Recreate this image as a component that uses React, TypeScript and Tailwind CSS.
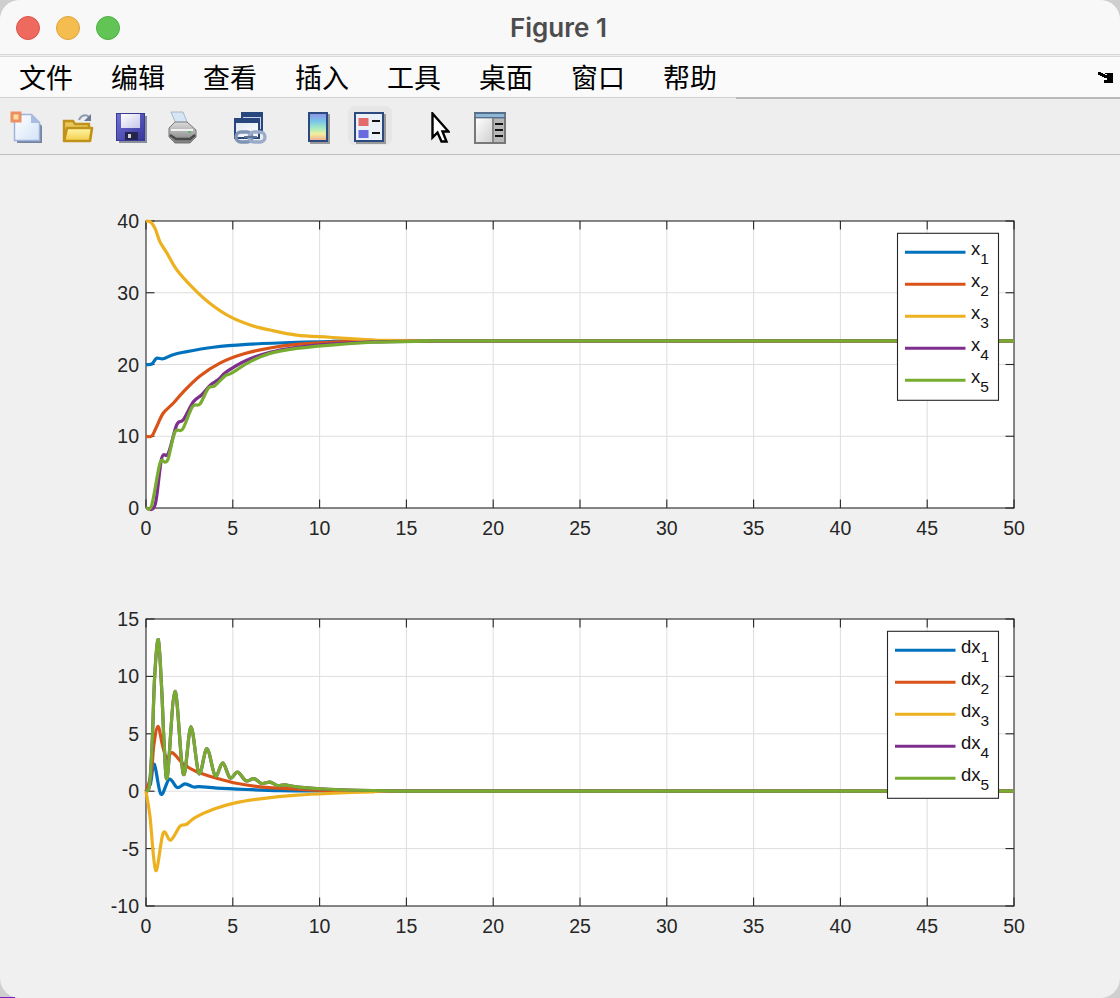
import React from 'react';

const BLUE = '#0072bd';
const RED = '#d95319';
const YELLOW = '#edb120';
const PURPLE = '#7e2f8e';
const GREEN = '#77ac30';

type Pt = [number, number];

const menus = ['文件', '编辑', '查看', '插入', '工具', '桌面', '窗口', '帮助'];

// traces read off the figure as [t, value]
const x1: Pt[] = [[0, 20], [0.33, 20.07], [0.61, 20.86], [0.99, 20.8], [1.48, 21.3], [2.15, 21.7], [3.88, 22.4], [5.8, 22.8], [8.68, 23.1], [10.6, 23.2], [15, 23.28], [50, 23.3]];
const x2: Pt[] = [[0, 10], [0.33, 10.03], [0.61, 11.33], [0.99, 13.2], [1.57, 14.6], [2.15, 16.2], [3.11, 18.4], [4.26, 20.2], [5.6, 21.46], [7.14, 22.3], [8.68, 22.8], [10.6, 23.1], [13, 23.25], [16, 23.3], [50, 23.3]];
const x3: Pt[] = [[0, 40], [0.3, 39.8], [0.55, 38.8], [0.8, 37.1], [1.19, 35.6], [1.77, 33.2], [2.73, 30.6], [3.69, 28.5], [4.84, 26.66], [6, 25.5], [7.14, 24.8], [8.68, 24.1], [10.6, 23.8], [13, 23.45], [17, 23.33], [50, 23.3]];
const x4: Pt[] = [[0, 0], [0.52, 0.4], [0.9, 6.9], [1.28, 7.6], [1.77, 11.6], [2.15, 12.3], [2.73, 14.8], [3.2, 15.75], [3.69, 17.1], [4.17, 17.9], [4.65, 19], [5.8, 20.6], [7.14, 21.7], [8.68, 22.4], [10.6, 22.85], [13, 23.15], [16, 23.27], [20, 23.3], [50, 23.3]];
const x5: Pt[] = [[0, 0], [0.33, 0.4], [0.8, 6.2], [1.09, 6.4], [1.28, 6.9], [1.67, 10.6], [2.11, 11], [2.67, 14.1], [3.11, 14.5], [3.59, 16.7], [3.97, 17.05], [4.55, 18.4], [4.93, 18.8], [6, 20.4], [7.14, 21.55], [8.68, 22.25], [10.6, 22.7], [13, 23.1], [16, 23.25], [19, 23.3], [50, 23.3]];

const d1: Pt[] = [[0, 0], [0.25, 0.6], [0.48, 2.35], [0.86, -0.26], [1.34, 1.05], [1.8, 0.32], [2.25, 0.64], [2.73, 0.37], [3.1, 0.4], [4.1, 0.27], [5.8, 0.15], [7.7, 0.05], [10, 0.02], [16, 0], [50, 0]];
const d2: Pt[] = [[0, 0], [0.3, 1.5], [0.45, 4], [0.69, 5.65], [0.95, 4], [1.2, 2.85], [1.52, 3.35], [2.15, 2.36], [2.92, 1.69], [4.06, 1.13], [5.2, 0.69], [6.7, 0.35], [8.7, 0.18], [10.5, 0.05], [16, 0], [50, 0]];
const d3: Pt[] = [[0, 0], [0.23, -2.2], [0.56, -6.9], [0.99, -3.64], [1.42, -4.27], [1.96, -3.05], [2.34, -2.88], [2.82, -2.3], [3.88, -1.57], [5.2, -0.99], [6.7, -0.64], [8.7, -0.35], [10.5, -0.2], [13, -0.07], [16, -0.01], [50, 0]];
const d5: Pt[] = [[0, 0], [0.2, 0.5], [0.35, 4], [0.5, 10], [0.71, 13.2], [0.9, 9], [1.05, 4], [1.23, 1.25], [1.67, 8.7], [2.15, 1.48], [2.59, 5.6], [3.05, 1.54], [3.51, 3.7], [3.99, 1.34], [4.42, 2.47], [4.84, 1.16], [5.28, 1.66], [5.76, 0.9], [6.22, 1.1], [6.66, 0.67], [7.14, 0.79], [7.57, 0.5], [8, 0.55], [8.7, 0.37], [10.5, 0.17], [14, 0.03], [19, 0], [50, 0]];

const AX_W = 868;
const AX_H = 287;
const AX_L = 36;
const AX_T = 21;
const FONT = '"Liberation Sans", Arial, sans-serif';
const INK = '#262626';

// catmull-rom through the points so the ripples stay round
function toPath(points: Pt[], yMin: number, yMax: number) {
  const p = points.map(([t, v]): Pt => [AX_L + (t / 50) * AX_W, AX_T + AX_H - ((v - yMin) / (yMax - yMin)) * AX_H]);
  let d = `M${p[0][0].toFixed(2)} ${p[0][1].toFixed(2)}`;
  for (let i = 0; i < p.length - 1; i++) {
    const a = p[Math.max(i - 1, 0)];
    const b = p[i];
    const c = p[i + 1];
    const e = p[Math.min(i + 2, p.length - 1)];
    const c1x = b[0] + (c[0] - a[0]) / 6;
    const c1y = b[1] + (c[1] - a[1]) / 6;
    const c2x = c[0] - (e[0] - b[0]) / 6;
    const c2y = c[1] - (e[1] - b[1]) / 6;
    d += `C${c1x.toFixed(2)} ${c1y.toFixed(2)} ${c2x.toFixed(2)} ${c2y.toFixed(2)} ${c[0].toFixed(2)} ${c[1].toFixed(2)}`;
  }
  return d;
}

type PlotProps = {
  yTicks: number[];
  traces: { color: string; data: Pt[] }[];
  legendX: number;
  lineX: number;
  prefix: string;
};

const Plot = ({ yTicks, traces, legendX, lineX, prefix }: PlotProps) => {
  const yMin = yTicks[0];
  const yMax = yTicks[yTicks.length - 1];
  const xTicks = [0, 5, 10, 15, 20, 25, 30, 35, 40, 45, 50];
  const px = (t: number) => AX_L + (t / 50) * AX_W;
  const py = (v: number) => AX_T + AX_H - ((v - yMin) / (yMax - yMin)) * AX_H;
  return (
    <svg width={950} height={340} viewBox="0 0 950 340" fontFamily={FONT} className="block shrink-0">
      <rect x={AX_L} y={AX_T} width={AX_W} height={AX_H} fill="#ffffff" />
      {xTicks.slice(1, -1).map((t) => (
        <line key={t} x1={px(t)} x2={px(t)} y1={AX_T} y2={AX_T + AX_H} stroke="#dedede" strokeWidth={1} />
      ))}
      {yTicks.slice(1, -1).map((v) => (
        <line key={v} x1={AX_L} x2={AX_L + AX_W} y1={py(v)} y2={py(v)} stroke="#dedede" strokeWidth={1} />
      ))}
      <rect x={AX_L} y={AX_T} width={AX_W} height={AX_H} fill="none" stroke={INK} strokeWidth={1.1} />
      {xTicks.map((t) => (
        <g key={t}>
          <line x1={px(t)} x2={px(t)} y1={AX_T} y2={AX_T + 8.5} stroke={INK} strokeWidth={1.1} />
          <line x1={px(t)} x2={px(t)} y1={AX_T + AX_H} y2={AX_T + AX_H - 8.5} stroke={INK} strokeWidth={1.1} />
          <text x={px(t)} y={AX_T + AX_H + 27} textAnchor="middle" fontSize={19.5} fill={INK}>{t}</text>
        </g>
      ))}
      {yTicks.map((v) => (
        <g key={v}>
          <line x1={AX_L} x2={AX_L + 8.5} y1={py(v)} y2={py(v)} stroke={INK} strokeWidth={1.1} />
          <line x1={AX_L + AX_W} x2={AX_L + AX_W - 8.5} y1={py(v)} y2={py(v)} stroke={INK} strokeWidth={1.1} />
          <text x={AX_L - 7} y={py(v) + 7} textAnchor="end" fontSize={19.5} fill={INK}>{v}</text>
        </g>
      ))}
      {traces.map((tr) => (
        <path key={tr.color} d={toPath(tr.data, yMin, yMax)} fill="none" stroke={tr.color} strokeWidth={3.2} strokeLinejoin="round" />
      ))}
      <rect x={legendX} y={33.3} width={998.5 - 110 - legendX} height={167} fill="#ffffff" stroke={INK} strokeWidth={1.1} />
      {traces.map((tr, i) => (
        <g key={tr.color}>
          <line x1={lineX} x2={lineX + 60.5} y1={52.3 + i * 32} y2={52.3 + i * 32} stroke={tr.color} strokeWidth={3} />
          <text x={lineX + 66} y={54.8 + i * 32} fontSize={18.5} fill="#111111">
            {prefix}
            <tspan fontSize={15.5} dy={9}>{i + 1}</tspan>
          </text>
        </g>
      ))}
    </svg>
  );
};

const NewIcon = () => (
  <svg width={34} height={33} viewBox="0 0 34 33" className="shrink-0">
    <defs>
      <linearGradient id="pg" x1="0" y1="0" x2="1" y2="1">
        <stop offset="0" stopColor="#ffffff" />
        <stop offset="1" stopColor="#d3e3f8" />
      </linearGradient>
    </defs>
    <path d="M7 6h16l9 9v17H7z" fill="#76849f" />
    <path d="M4.5 3.5h17l8 8v18h-25z" fill="url(#pg)" stroke="#9fb4da" strokeWidth={1.5} />
    <path d="M21 3l9 9h-9z" fill="#a9bde0" />
    <rect x={2} y={2} width={8} height={8} fill="#fbdf9c" stroke="#ec8f64" strokeWidth={3} />
  </svg>
);

const OpenIcon = () => (
  <svg width={32} height={31} viewBox="0 0 32 31" className="shrink-0">
    <defs>
      <linearGradient id="fg" x1="0" y1="0" x2="0" y2="1">
        <stop offset="0" stopColor="#fff7a8" />
        <stop offset="1" stopColor="#f3cc4a" />
      </linearGradient>
    </defs>
    <path d="M17 8c2-5 7-6 10-3" fill="none" stroke="#8d9ab0" strokeWidth={2} />
    <path d="M29 2v7h-7z" fill="#6b7c9a" />
    <path d="M2 28V9h9l2 3h14v4" fill="#e9c65c" stroke="#c0921a" strokeWidth={2.4} />
    <path d="M2 29l3-13h25l-2 13z" fill="url(#fg)" stroke="#c0921a" strokeWidth={2.6} strokeLinejoin="round" />
  </svg>
);

const SaveIcon = () => (
  <svg width={31} height={30} viewBox="0 0 31 30" className="shrink-0">
    <defs>
      <linearGradient id="sg" x1="0" y1="0" x2="1" y2="1">
        <stop offset="0" stopColor="#ffffff" />
        <stop offset="1" stopColor="#c4c8ea" />
      </linearGradient>
      <linearGradient id="sf" x1="0" y1="0" x2="1" y2="1">
        <stop offset="0" stopColor="#7272d6" />
        <stop offset="1" stopColor="#36369a" />
      </linearGradient>
    </defs>
    <rect x={3} y={3} width={28} height={27} fill="#8a8f9c" />
    <rect x={0.5} y={0.5} width={28} height={27} fill="url(#sf)" stroke="#3a3a96" />
    <rect x={5} y={1} width={19} height={14} fill="url(#sg)" />
    <rect x={9} y={19} width={13} height={8} fill="#24244c" />
    <rect x={12} y={21} width={3} height={4} fill="#d5d5d5" />
  </svg>
);

const PrintIcon = () => (
  <svg width={29} height={33} viewBox="0 0 29 33" className="shrink-0">
    <defs>
      <linearGradient id="prg" x1="0" y1="0" x2="0" y2="1">
        <stop offset="0" stopColor="#dcdcdc" />
        <stop offset="1" stopColor="#7c7c7c" />
      </linearGradient>
    </defs>
    <path d="M3 1h12l5 12H8z" fill="#d6e6f5" stroke="#a8b8c8" />
    <path d="M1 17l6-6h12l9 8v7l-6 6H7l-6-6z" fill="url(#prg)" stroke="#777777" />
    <path d="M3 19h22" stroke="#f0f0f0" strokeWidth={2} />
    <path d="M2 24l6 4h14l5-4" fill="none" stroke="#4a4a4a" strokeWidth={2.5} />
    <rect x={20} y={20} width={3} height={2} fill="#6ab56a" />
  </svg>
);

const LinkIcon = () => (
  <svg width={33} height={32} viewBox="0 0 33 32" className="shrink-0">
    <defs>
      <linearGradient id="wg" x1="0" y1="0" x2="1" y2="1">
        <stop offset="0" stopColor="#dfe7f3" />
        <stop offset="1" stopColor="#ffffff" />
      </linearGradient>
    </defs>
    <rect x={8} y={1} width={20} height={17} fill="#c8d2e4" stroke="#28477e" strokeWidth={2} />
    <rect x={8} y={1} width={20} height={4} fill="#28477e" />
    <rect x={1} y={7} width={24} height={19} fill="url(#wg)" stroke="#28477e" strokeWidth={2} />
    <rect x={1} y={7} width={24} height={4} fill="#28477e" />
    <rect x={2} y={20} width={16} height={10} rx={5} fill="none" stroke="#7f93b4" strokeWidth={3.4} />
    <rect x={15} y={20} width={16} height={10} rx={5} fill="none" stroke="#9aacc9" strokeWidth={3.4} />
    <path d="M10 25h13" stroke="#5f7394" strokeWidth={2} />
  </svg>
);

const ColorbarIcon = () => (
  <svg width={22} height={32} viewBox="0 0 22 32" className="shrink-0">
    <defs>
      <linearGradient id="cb" x1="0" y1="0" x2="0" y2="1">
        <stop offset="0" stopColor="#8f8fe6" />
        <stop offset="0.3" stopColor="#79c6e6" />
        <stop offset="0.55" stopColor="#a8ecc0" />
        <stop offset="0.75" stopColor="#f2eea0" />
        <stop offset="1" stopColor="#f0a890" />
      </linearGradient>
    </defs>
    <rect x={2} y={2} width={20} height={30} fill="#9a9a9a" />
    <rect x={1} y={1} width={18} height={28} fill="url(#cb)" stroke="#2c4a80" strokeWidth={2} />
  </svg>
);

const LegendIcon = () => (
  <div className="-mt-[4px] flex h-[39px] w-[44px] shrink-0 items-center justify-center rounded-[7px] bg-[#e6e6e6]">
    <svg width={32} height={32} viewBox="0 0 32 32" className="mt-[4px]">
      <rect x={2} y={2} width={30} height={30} fill="#9a9a9a" />
      <rect x={1} y={1} width={28} height={28} fill="#eaf0f8" stroke="#2c4a80" strokeWidth={2} />
      <rect x={4.5} y={6} width={10} height={8} fill="#e46a6a" />
      <rect x={4.5} y={18} width={10} height={8} fill="#6a6ae0" />
      <path d="M18 9h8M18 21h8" stroke="#111111" strokeWidth={2} />
    </svg>
  </div>
);

const CursorIcon = () => (
  <svg width={19} height={31} viewBox="0 0 19 31" className="shrink-0">
    <path d="M1.5 1.5v24l5-5 4 9h5l-4-10h6z" fill="#ffffff" stroke="#000000" strokeWidth={2.4} strokeLinejoin="miter" />
  </svg>
);

const PanelIcon = () => (
  <svg width={32} height={32} viewBox="0 0 32 32" className="shrink-0">
    <defs>
      <linearGradient id="pn" x1="0" y1="0" x2="1" y2="1">
        <stop offset="0" stopColor="#ffffff" />
        <stop offset="1" stopColor="#d0d0d0" />
      </linearGradient>
    </defs>
    <rect x={1} y={1} width={30} height={30} fill="#b8b8b8" stroke="#787878" strokeWidth={2} />
    <rect x={2} y={2} width={28} height={3} fill="#8fb8d6" />
    <rect x={0} y={0} width={32} height={2} fill="#54708c" />
    <rect x={0} y={5} width={32} height={1.5} fill="#54708c" />
    <rect x={2} y={6.5} width={16} height={23.5} fill="url(#pn)" />
    <path d="M19 6.5V30" stroke="#787878" strokeWidth={1.5} />
    <path d="M21 12h8M21 18h8M21 24h8" stroke="#111111" strokeWidth={2} />
  </svg>
);

export default function App() {
  return (
    <div className="relative h-[998px] w-[1120px] overflow-hidden bg-[#cfcfcf]">
      <div className="flex h-full flex-col overflow-hidden rounded-[20px] bg-[#f0f0f0]">
        <div className="relative flex h-[54px] shrink-0 items-center justify-center bg-[#f8f8f8] pr-[3px]">
          <div className="absolute left-[16px] top-[16px] flex gap-[16px]">
            <span className="h-[24px] w-[24px] rounded-full border border-[#d9564c] bg-[#ee6a5f]" />
            <span className="h-[24px] w-[24px] rounded-full border border-[#dca33c] bg-[#f5bd4f]" />
            <span className="h-[24px] w-[24px] rounded-full border border-[#4fae44] bg-[#61c454]" />
          </div>
          <span className="font-['Inter',sans-serif] text-[26px] font-semibold text-[#4d4d4d]">Figure 1</span>
        </div>
        <div className="h-[3px] shrink-0 border-y border-[#d8d8d8] bg-[#f0f0f0]" />

        <div className="relative flex h-[40px] shrink-0 items-center bg-[#fafafa]">
          {menus.map((m) => (
            <span key={m} className="w-[92px] text-center font-['Noto_Sans_CJK_SC',sans-serif] text-[27px] leading-[40px] text-black">{m}</span>
          ))}
          <svg width={15} height={11} viewBox="0 0 15 11" className="absolute left-[1098px] top-[15px]" shapeRendering="crispEdges">
            <path d="M0 0h3v1h2v1h2v1h2V2H7V1h8v10H6V8h3V6H6V5H4V4H2V3H0z" fill="#000000" />
          </svg>
        </div>
        <div className="flex h-[2px] shrink-0">
          <div className="h-[1px] w-[736px] bg-[#cfcfcf]" />
          <div className="h-[2px] flex-1 bg-[#b9b9b9]" />
        </div>

        <div className="flex h-[56px] shrink-0 items-center border-b border-[#bdbdbd] bg-[#eeeeee] pl-[10px] pt-[2px]">
          <NewIcon />
          <div className="ml-[18px]"><OpenIcon /></div>
          <div className="ml-[22px]"><SaveIcon /></div>
          <div className="ml-[21px]"><PrintIcon /></div>
          <div className="ml-[37px]"><LinkIcon /></div>
          <div className="ml-[41px]"><ColorbarIcon /></div>
          <div className="ml-[18px]"><LegendIcon /></div>
          <div className="ml-[39px]"><CursorIcon /></div>
          <div className="ml-[24px]"><PanelIcon /></div>
        </div>

        <div className="flex flex-1 flex-col gap-[58px] pl-[110px] pt-[45px]">
          <Plot
            yTicks={[0, 10, 20, 30, 40]}
            traces={[
              { color: BLUE, data: x1 },
              { color: RED, data: x2 },
              { color: YELLOW, data: x3 },
              { color: PURPLE, data: x4 },
              { color: GREEN, data: x5 },
            ]}
            legendX={787.5}
            lineX={795}
            prefix="x"
          />
          <Plot
            yTicks={[-10, -5, 0, 5, 10, 15]}
            traces={[
              { color: BLUE, data: d1 },
              { color: RED, data: d2 },
              { color: YELLOW, data: d3 },
              { color: PURPLE, data: d5 },
              { color: GREEN, data: d5 },
            ]}
            legendX={777.5}
            lineX={785}
            prefix="dx"
          />
        </div>
      </div>
      <div className="absolute bottom-0 left-0 h-[1px] w-[15px] bg-[#7a1fc0]" />
    </div>
  );
}
